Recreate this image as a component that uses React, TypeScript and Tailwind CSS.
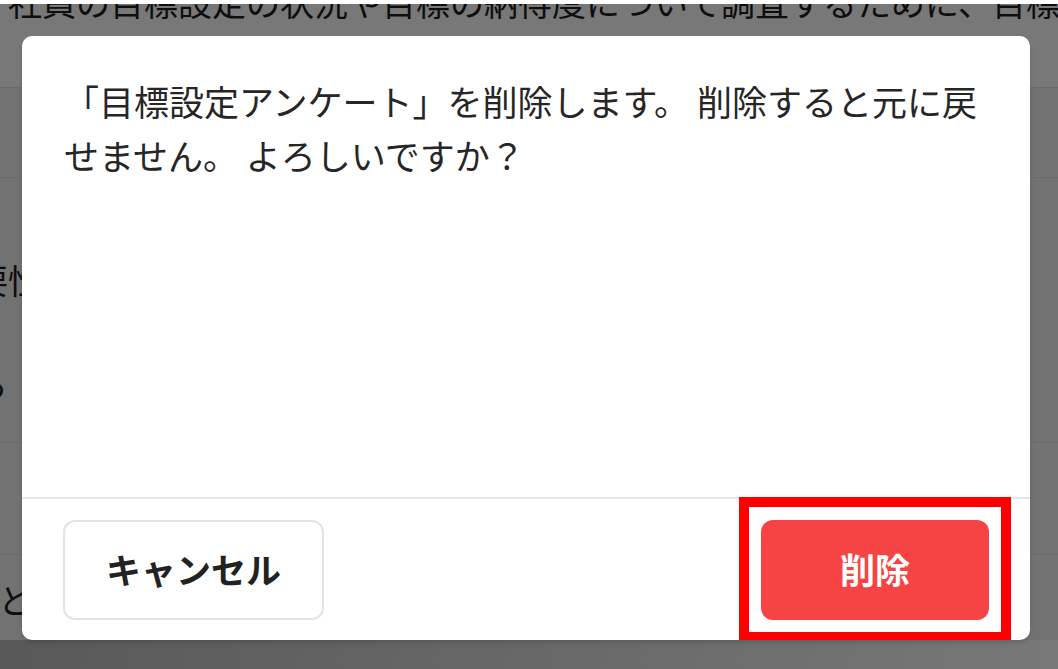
import React from 'react';

const font = { fontFamily: '"Noto Sans CJK JP", "Noto Sans", sans-serif' };

export default function App() {
    return (
        <div style={font} className="relative w-[1058px] h-[669px] overflow-hidden bg-white text-[#1f1f1f]">
            {/* Page behind the dialog */}
            <div className="flex flex-col h-full">
                <div className="h-[4px] bg-white shrink-0" />
                <div className="h-[84px] shrink-0 border-b border-[#e2e2e2] overflow-hidden">
                    <p className="mt-[-22px] pl-[8px] text-[34px] leading-[40px] whitespace-nowrap">
                        社員の目標設定の状況や目標の納得度について調査するために、目標
                    </p>
                </div>
                <div className="h-[90px] shrink-0 bg-[#f3f3f3] border-b border-[#e2e2e2]" />
                <div className="h-[265px] shrink-0 bg-[#f3f3f3] border-b border-[#e2e2e2] flex flex-col">
                    <p className="mt-[75px] ml-[-60px] text-[34px] leading-[54px] whitespace-nowrap">重要性について</p>
                    <p className="mt-[50px] ml-[-26px] text-[34px] leading-[54px] whitespace-nowrap">ら</p>
                </div>
                <div className="h-[112px] shrink-0 bg-[#f3f3f3] border-b border-[#e2e2e2]" />
                <div className="h-[85px] shrink-0 bg-[#f3f3f3]">
                    <p className="mt-[18px] ml-[-2px] text-[34px] leading-[54px] whitespace-nowrap">とれ</p>
                </div>
                <div className="flex-1 bg-gradient-to-r from-[#bdbdbd] to-white" />
            </div>

            {/* Dim overlay */}
            <div className="absolute left-0 right-0 top-[4px] bottom-0 bg-black/[0.53]" />

            {/* Dialog */}
            <div className="absolute left-[22px] top-[36px] w-[1008px] h-[604px] bg-white rounded-[10px] shadow-md flex flex-col overflow-hidden">
                <div className="flex-1 pl-[42px] pr-[42px] pt-[38px]">
                    <p className="text-[35px] leading-[54px] text-[#262626]">
                        「目標設定アンケート」を削除します。 削除すると元に戻せません。 よろしいですか？
                    </p>
                </div>
                <div className="relative h-[143px] shrink-0 border-t-2 border-[#e3e8ee] px-[41px] flex items-center justify-between">
                    <button className="w-[261px] h-[100px] rounded-[12px] border-2 border-[#dfe4ea] bg-white text-[35px] font-bold text-[#222]">
                        キャンセル
                    </button>
                    <button className="w-[228px] h-[100px] rounded-[12px] bg-[#f64444] text-[35px] font-bold text-white">
                        削除
                    </button>
                    <div className="absolute right-[19px] top-[-2px] w-[272px] h-[145px] border-[10px] border-[#ff0000]" />
                </div>
            </div>
        </div>
    );
}
